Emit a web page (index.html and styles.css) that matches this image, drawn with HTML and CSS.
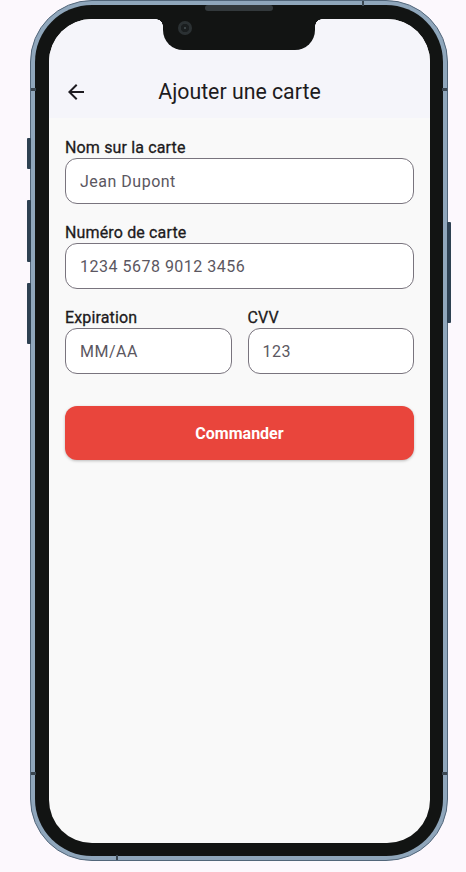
FILE: index.html
```html
<!DOCTYPE html>
<html lang="fr">
<head>
<meta charset="utf-8">
<title>Ajouter une carte</title>
<link rel="stylesheet" href="styles.css">
</head>
<body>
<div class="phone">
  <span class="speaker"></span>
  <span class="band band-top"></span>
  <span class="band band-bottom"></span>
  <span class="band band-l1"></span>
  <span class="band band-r1"></span>
  <span class="band band-l2"></span>
  <span class="band band-r2"></span>
  <span class="btn-side btn-mute"></span>
  <span class="btn-side btn-vol-up"></span>
  <span class="btn-side btn-vol-down"></span>
  <span class="btn-side btn-power"></span>
  <div class="bezel">
    <div class="screen">
      <div class="notch"><span class="camera"></span></div>
      <header class="appbar">
        <div class="appbar-row">
          <svg class="back" viewBox="0 0 24 24" width="24" height="24" aria-hidden="true"><path d="M20 11H7.83l5.59-5.59L12 4l-8 8 8 8 1.41-1.41L7.83 13H20v-2z" fill="#1d1b20"/></svg>
          <h1 class="title">Ajouter une carte</h1>
          <span></span>
        </div>
      </header>
      <main class="form">
        <div class="field">
          <label class="label">Nom sur la carte</label>
          <input class="input" type="text" placeholder="Jean Dupont">
        </div>
        <div class="field">
          <label class="label">Numéro de carte</label>
          <input class="input" type="text" placeholder="1234 5678 9012 3456">
        </div>
        <div class="row">
          <div class="field">
            <label class="label">Expiration</label>
            <input class="input" type="text" placeholder="MM/AA">
          </div>
          <div class="field">
            <label class="label">CVV</label>
            <input class="input" type="text" placeholder="123">
          </div>
        </div>
        <button class="submit" type="button">Commander</button>
      </main>
    </div>
  </div>
</div>
</body>
</html>
```
FILE: styles.css
```css
* { box-sizing: border-box; }
html, body { margin: 0; padding: 0; }
body {
  background: #fcf8fd;
  font-family: Roboto, "Liberation Sans", sans-serif;
  width: 466px;
  height: 872px;
  overflow: hidden;
}
.phone {
  position: relative;
  margin-left: 30px;
  width: 418px;
  height: 861px;
  border-radius: 62px;
  background: #8fa6bb;
  border: 1px solid #52667a;
  padding: 4px;
}
.speaker {
  position: absolute;
  left: 174px;
  top: 4px;
  width: 68px;
  height: 6px;
  border-radius: 3px;
  background: #33393c;
  z-index: 2;
}
.band { position: absolute; background: #3a4650; }
.band-top { left: 331px; top: 0; width: 2px; height: 5px; }
.band-bottom { left: 85px; bottom: 0; width: 2px; height: 5px; }
.band-l1 { left: 0; top: 87px; width: 5px; height: 3px; }
.band-r1 { right: 0; top: 87px; width: 5px; height: 3px; }
.band-l2 { left: 0; top: 771px; width: 5px; height: 3px; }
.band-r2 { right: 0; top: 771px; width: 5px; height: 3px; }
.btn-side {
  position: absolute;
  width: 4px;
  background: #2e4152;
  border-radius: 1px;
}
.btn-mute { left: -4px; top: 137px; height: 31px; }
.btn-vol-up { left: -4px; top: 199px; height: 62px; }
.btn-vol-down { left: -4px; top: 282px; height: 61px; }
.btn-power { right: -4px; top: 221px; height: 101px; }
.bezel {
  height: 100%;
  border-radius: 57px;
  background: #121413;
  padding: 14px 13px 13px 14px;
}
.screen {
  position: relative;
  height: 100%;
  border-radius: 43px;
  background: #f9f9f9;
  overflow: hidden;
}
.notch {
  position: absolute;
  left: 114px;
  top: 0;
  width: 152px;
  height: 31px;
  background: #121413;
  border-radius: 0 0 20px 20px;
  z-index: 3;
}
.notch::before, .notch::after {
  content: "";
  position: absolute;
  top: 0;
  width: 7px;
  height: 7px;
}
.notch::before {
  left: -7px;
  background: radial-gradient(circle at 0 100%, transparent 6.5px, #121413 7px);
}
.notch::after {
  right: -7px;
  background: radial-gradient(circle at 100% 100%, transparent 6.5px, #121413 7px);
}
.camera {
  position: absolute;
  left: 15px;
  top: 2px;
  width: 14px;
  height: 14px;
  border-radius: 50%;
  background: radial-gradient(circle, #3c4446 0 1px, #1a1e1f 1.5px 4px, #2b3133 4.5px 7px);
}
.appbar {
  background: #f5f5fa;
  padding: 49px 0 2px;
}
.appbar-row {
  height: 48px;
  display: grid;
  grid-template-columns: 1fr auto 1fr;
  align-items: center;
  padding: 0 15px;
}
.back { display: block; }
.title {
  margin: 0;
  font-size: 21.3px;
  font-weight: 400;
  color: #1d1b20;
  line-height: 28px;
}
.form {
  padding: 19px 16px 0 16px;
}
.field {
  display: flex;
  flex-direction: column;
  margin-bottom: 18px;
}
.row .field { margin-bottom: 0; }
.label {
  font-size: 16px;
  font-weight: 400;
  letter-spacing: 0.15px;
  -webkit-text-stroke: 0.3px #1d1b20;
  line-height: 21px;
  color: #1d1b20;
}
.input {
  height: 46px;
  width: 100%;
  border: 1px solid #79747e;
  border-radius: 12px;
  background: #fff;
  padding: 0 14px;
  font-family: Roboto, "Liberation Sans", sans-serif;
  font-size: 16px;
  letter-spacing: 0.5px;
  color: #1d1b20;
  outline: none;
}
.input::placeholder { color: #5b5761; opacity: 1; }
.row {
  display: grid;
  grid-template-columns: 1fr 1fr;
  gap: 16px;
}
.submit {
  display: block;
  width: 100%;
  height: 54px;
  margin-top: 32px;
  border: none;
  border-radius: 12px;
  background: #e9453c;
  color: #fff;
  font-family: Roboto, "Liberation Sans", sans-serif;
  font-size: 16px;
  font-weight: 700;
  box-shadow: 0 1px 3px rgba(0,0,0,0.25);
}
```
